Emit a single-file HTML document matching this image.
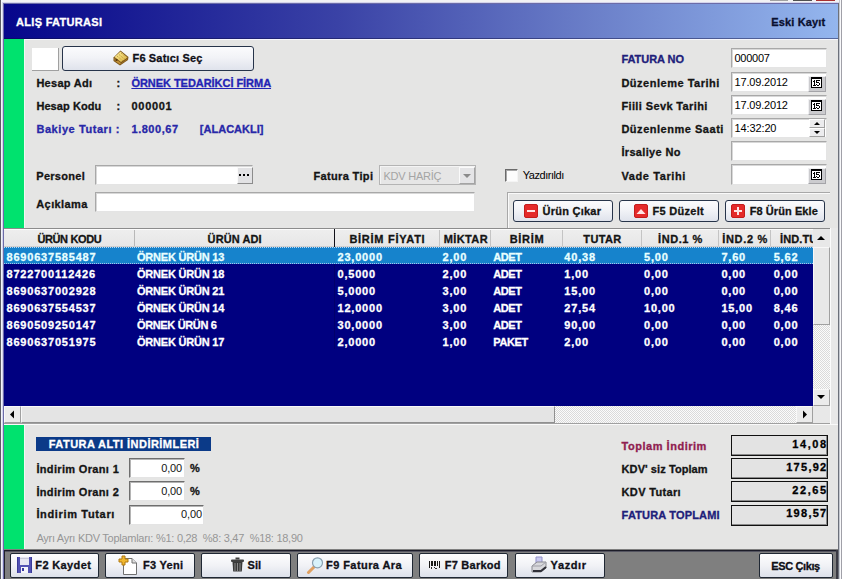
<!DOCTYPE html>
<html><head><meta charset="utf-8">
<style>
*{margin:0;padding:0;box-sizing:border-box}
html,body{width:842px;height:579px;overflow:hidden;background:#e5e5e4;position:relative}
body{font-family:"Liberation Sans",sans-serif;font-size:11px}
.a{position:absolute}
.t{position:absolute;white-space:pre;font-size:11px;line-height:14px;font-family:"Liberation Sans",sans-serif}
.t.b{-webkit-text-stroke:0.3px currentColor}
.inp{position:absolute;background:#fff;border-top:1px solid #a8a8a8;border-left:1px solid #a8a8a8;border-right:1px solid #e4e4e4;border-bottom:1px solid #e4e4e4;box-shadow:inset 1px 1px 0 #d8d8d8}
.btn{position:absolute;border:1px solid #27344a;border-radius:3px;background:linear-gradient(#fbfbfd 0%,#f2f3f7 45%,#dfe3ec 100%)}
.tb{position:absolute;border:1px solid #1f2733;border-radius:2px;background:linear-gradient(#fdfdfe 0%,#f1f2f6 50%,#dde1ea 100%);top:553px;height:25px}
.cal{position:absolute;width:18px;height:16px;background:#cbcbce;border:1px solid #f0f0f2;border-right-color:#a4a4a8;border-bottom-color:#a4a4a8}
.cal i{position:absolute;left:2px;top:1px;width:12px;height:12px;border:1px solid #000;border-top-width:2px;border-right-width:2px;background:#fff;font:bold 9px/9px "Liberation Sans";font-style:normal;text-align:center;color:#000;letter-spacing:-0.6px;text-indent:-1px}
.inp2{border-top-color:#6e6e6e;border-left-color:#6e6e6e;box-shadow:inset 1px 1px 0 #b4b4b4}
.tot{position:absolute;left:731px;width:97px;height:21px;border:1px solid #101010;box-shadow:inset -1px -1px 0 #8a8a8a;background:#e3e3e3}
.sep{position:absolute;top:230px;width:1px;height:16px;background:#c4c4c4}
</style></head><body>
<!-- window frame -->
<div class="a" style="left:0;top:0;width:842px;height:4px;background:#f2f2f4"></div>
<div class="a" style="left:770px;top:0;width:18px;height:1px;background:#a0a0a0"></div>
<div class="a" style="left:793px;top:0;width:19px;height:1px;background:#505050"></div>
<div class="a" style="left:816px;top:0;width:19px;height:1px;background:#a83030"></div>
<div class="a" style="left:0;top:0;width:1px;height:579px;background:#5c5c64"></div>
<div class="a" style="left:1px;top:0;width:2px;height:579px;background:#f2f6fa"></div>
<div class="a" style="left:2px;top:2px;width:1px;height:577px;background:#d4d4ec"></div>
<div class="a" style="left:2px;top:2px;width:837px;height:1px;background:#d4d4ec"></div>
<div class="a" style="left:3px;top:3px;width:1px;height:576px;background:#6c6ca8"></div>
<div class="a" style="left:3px;top:3px;width:836px;height:1px;background:#6c6ca8"></div>
<div class="a" style="left:838px;top:3px;width:1px;height:576px;background:#6c707a"></div>
<div class="a" style="left:839px;top:0;width:1px;height:579px;background:#c4c8d0"></div>
<div class="a" style="left:840px;top:0;width:1px;height:579px;background:#f8f8fa"></div>
<div class="a" style="left:841px;top:0;width:1px;height:579px;background:#a0a0a8"></div>
<!-- header -->
<div class="a" style="left:4px;top:4px;width:834px;height:35px;background:linear-gradient(90deg,#06068c 0%,#121490 10%,#3a42a6 40%,#6a7ec8 70%,#94b6ee 100%)"></div>
<div class="a" style="left:4px;top:38px;width:834px;height:1px;background:rgba(10,10,60,0.45)"></div>
<div class="a" style="left:24px;top:39px;width:814px;height:1px;background:#f6f6fc"></div>
<!-- green strips -->
<div class="a" style="left:4px;top:39px;width:20px;height:189px;background:#00e26e"></div>
<div class="a" style="left:4px;top:425px;width:20px;height:125px;background:#00e26e"></div>
<div class="a" style="left:24px;top:39px;width:1px;height:189px;background:#f0f8f2"></div>
<div class="a" style="left:24px;top:425px;width:1px;height:125px;background:#f0f8f2"></div>
<!-- white box -->
<div class="a" style="left:32px;top:48px;width:27px;height:23px;background:#fff;border-right:1px solid #a0a0a0;border-bottom:1px solid #a0a0a0"></div>
<!-- F6 button -->
<div class="btn" style="left:62px;top:46px;width:192px;height:25px"></div>
<svg class="a" style="left:112px;top:49px" width="18" height="18"><defs><linearGradient id="gy" x1="0" y1="0" x2="1" y2="1"><stop offset="0" stop-color="#fff2a0"/><stop offset="1" stop-color="#d8b040"/></linearGradient></defs><path d="M8.5 1.5 L16.5 8 L16 11 L8 16.5 L1.5 12 L1.5 8.5 Z" fill="#7a5418"/><path d="M8.5 2.5 L15.5 8.5 L9 13 L2.5 8 Z" fill="url(#gy)"/><path d="M2.5 9 L9 14 L8 15.5 L2.5 11.5 Z" fill="#c09038"/><path d="M9.5 14 L15.5 9.5 L15.5 10.5 L9 15 Z" fill="#a87828"/><path d="M5 7 L11 12 M7 5.5 L13 10.5 M9 4 L14.5 8.5" stroke="#b89030" stroke-width="0.8" stroke-dasharray="1.2 1"/><rect x="3.5" y="10" width="2" height="2" fill="#5a3a10"/></svg>
<!-- right inputs -->
<div class="inp" style="left:731px;top:48px;width:96px;height:20px"></div>
<div class="inp" style="left:731px;top:72px;width:96px;height:20px"></div>
<div class="inp" style="left:731px;top:95px;width:96px;height:20px"></div>
<div class="inp" style="left:731px;top:118px;width:96px;height:20px"></div>
<div class="inp" style="left:731px;top:141px;width:96px;height:20px"></div>
<div class="inp" style="left:731px;top:164px;width:96px;height:21px"></div>
<div class="cal" style="left:808px;top:76px"><svg width="18" height="16" style="position:absolute;left:-1px;top:-1px" shape-rendering="crispEdges"><rect x="3" y="1" width="11" height="11" fill="#000"/><rect x="4" y="3" width="9" height="8" fill="#fff"/><path d="M6 4h1v1h-1zM5 5h1v1h-1zM6 5h1v1h-1zM6 6h1v1h-1zM6 7h1v1h-1zM6 8h1v1h-1zM5 9h1v1h-1zM6 9h1v1h-1zM7 9h1v1h-1zM8 4h1v1h-1zM9 4h1v1h-1zM10 4h1v1h-1zM11 4h1v1h-1zM8 5h1v1h-1zM8 6h1v1h-1zM9 6h1v1h-1zM10 6h1v1h-1zM11 7h1v1h-1zM8 8h1v1h-1zM11 8h1v1h-1zM9 9h1v1h-1zM10 9h1v1h-1z" fill="#000"/></svg></div>
<div class="cal" style="left:808px;top:99px"><svg width="18" height="16" style="position:absolute;left:-1px;top:-1px" shape-rendering="crispEdges"><rect x="3" y="1" width="11" height="11" fill="#000"/><rect x="4" y="3" width="9" height="8" fill="#fff"/><path d="M6 4h1v1h-1zM5 5h1v1h-1zM6 5h1v1h-1zM6 6h1v1h-1zM6 7h1v1h-1zM6 8h1v1h-1zM5 9h1v1h-1zM6 9h1v1h-1zM7 9h1v1h-1zM8 4h1v1h-1zM9 4h1v1h-1zM10 4h1v1h-1zM11 4h1v1h-1zM8 5h1v1h-1zM8 6h1v1h-1zM9 6h1v1h-1zM10 6h1v1h-1zM11 7h1v1h-1zM8 8h1v1h-1zM11 8h1v1h-1zM9 9h1v1h-1zM10 9h1v1h-1z" fill="#000"/></svg></div>
<div class="cal" style="left:808px;top:168px"><svg width="18" height="16" style="position:absolute;left:-1px;top:-1px" shape-rendering="crispEdges"><rect x="3" y="1" width="11" height="11" fill="#000"/><rect x="4" y="3" width="9" height="8" fill="#fff"/><path d="M6 4h1v1h-1zM5 5h1v1h-1zM6 5h1v1h-1zM6 6h1v1h-1zM6 7h1v1h-1zM6 8h1v1h-1zM5 9h1v1h-1zM6 9h1v1h-1zM7 9h1v1h-1zM8 4h1v1h-1zM9 4h1v1h-1zM10 4h1v1h-1zM11 4h1v1h-1zM8 5h1v1h-1zM8 6h1v1h-1zM9 6h1v1h-1zM10 6h1v1h-1zM11 7h1v1h-1zM8 8h1v1h-1zM11 8h1v1h-1zM9 9h1v1h-1zM10 9h1v1h-1z" fill="#000"/></svg></div>
<!-- spinner -->
<div class="a" style="left:809px;top:119px;width:16px;height:9px;background:#ececee;border:1px solid #fff;border-right-color:#a0a0a0;border-bottom-color:#a0a0a0"></div>
<div class="a" style="left:809px;top:128px;width:16px;height:9px;background:#ececee;border:1px solid #fff;border-right-color:#a0a0a0;border-bottom-color:#a0a0a0"></div>
<svg class="a" style="left:809px;top:119px" width="16" height="18"><path d="M5 6 L11 6 L8 3 Z" fill="#000"/><path d="M5 12 L11 12 L8 15 Z" fill="#000"/></svg>
<!-- personel -->
<div class="inp" style="left:95px;top:165px;width:158px;height:20px"></div>
<div class="a" style="left:237px;top:167px;width:16px;height:17px;background:#e2e2e4;border:1px solid #fafafa;border-right-color:#8c8c8c;border-bottom-color:#8c8c8c"></div>
<svg class="a" style="left:237px;top:167px" width="16" height="17" shape-rendering="crispEdges"><rect x="2" y="7" width="2" height="2" fill="#000"/><rect x="6" y="7" width="2" height="2" fill="#000"/><rect x="10" y="7" width="2" height="2" fill="#000"/></svg>
<div class="inp" style="left:95px;top:192px;width:380px;height:20px"></div>
<!-- fatura tipi combo -->
<div class="a" style="left:379px;top:165px;width:97px;height:20px;background:#e6e6e6;border:1px solid #b4b4b4;box-shadow:inset 1px 1px 0 #f4f4f4"></div>
<div class="a" style="left:459px;top:167px;width:16px;height:17px;background:#e4e4e6;border:1px solid #fafafa;border-right-color:#a4a4a4;border-bottom-color:#a4a4a4"></div>
<svg class="a" style="left:459px;top:167px" width="16" height="17"><path d="M4 7 L12 7 L8 11 Z" fill="#8a8a8a"/></svg>
<!-- checkbox -->
<div class="a" style="left:505px;top:169px;width:13px;height:13px;background:#fcfcfc;border-top:1px solid #6a6a6a;border-left:1px solid #6a6a6a;border-right:1px solid #f4f4f4;border-bottom:1px solid #f4f4f4;box-shadow:inset 1px 1px 0 #a8a8a8"></div>
<!-- button panel -->
<div class="a" style="left:507px;top:192px;width:323px;height:37px;border-top:1px solid #a8a8a8;border-left:1px solid #a8a8a8;box-shadow:inset 1px 1px 0 #fafafa"></div>
<div class="btn" style="left:513px;top:200px;width:100px;height:22px"></div>
<div class="btn" style="left:619px;top:200px;width:100px;height:22px"></div>
<div class="btn" style="left:725px;top:200px;width:100px;height:22px"></div>
<svg class="a" style="left:524px;top:204px" width="14" height="14"><rect x="0.5" y="0.5" width="13" height="13" rx="1.5" fill="#e42a2a" stroke="#c41c1c"/><rect x="3" y="6" width="8" height="2" fill="#ffe4e4"/></svg>
<svg class="a" style="left:634px;top:204px" width="14" height="14"><rect x="0.5" y="0.5" width="13" height="13" rx="1.5" fill="#e42a2a" stroke="#c41c1c"/><path d="M2.5 10 L7 5 L11.5 10 Z" fill="#ffe4e4"/></svg>
<svg class="a" style="left:731px;top:204px" width="14" height="14"><rect x="0.5" y="0.5" width="13" height="13" rx="1.5" fill="#e42a2a" stroke="#c41c1c"/><rect x="3" y="6" width="8" height="2" fill="#ffe4e4"/><rect x="6" y="3" width="2" height="8" fill="#ffe4e4"/></svg>
<!-- grid -->
<div class="a" style="left:4px;top:228px;width:826px;height:1px;background:#8c8c8c"></div>
<div class="a" style="left:4px;top:229px;width:809px;height:18px;background:linear-gradient(#eeeeee,#e6e6e6);border-top:1px solid #fcfcfc"></div>
<div class="a" style="left:4px;top:246px;width:809px;height:1px;background:#cfcfcf"></div>
<div class="sep" style="left:134px;background:#b8b8b8"></div>
<div class="a" style="left:334px;top:229px;width:1px;height:177px;background:#101018"></div>
<div class="sep" style="left:439px"></div>
<div class="sep" style="left:490px"></div>
<div class="sep" style="left:562px"></div>
<div class="sep" style="left:641px"></div>
<div class="sep" style="left:718px"></div>
<div class="sep" style="left:770px"></div>
<div class="a" style="left:4px;top:247px;width:809px;height:159px;background:#000080"></div>
<div class="a" style="left:334px;top:247px;width:1px;height:102px;background:#00006a"></div>
<div class="a" style="left:4px;top:247px;width:809px;height:17px;background:#1683cc;border-top:1px dotted #c0d8f0;border-bottom:1px dotted #a8c0f0"></div>
<!-- vscroll -->
<div class="a" style="left:813px;top:229px;width:17px;height:177px;background:repeating-conic-gradient(#fbfbfb 0 25%,#dadada 0 50%) 0 0/2px 2px"></div>
<div class="a" style="left:813px;top:229px;width:17px;height:18px;background:#e8e8e8"></div>
<svg class="a" style="left:813px;top:229px" width="16" height="18"><path d="M4 11 L12 11 L8 7 Z" fill="#000"/></svg>
<div class="a" style="left:813px;top:247px;width:17px;height:78px;background:#e8e8e8;border:1px solid #f8f8f8;border-right-color:#a0a0a0;border-bottom-color:#a0a0a0"></div>
<div class="a" style="left:813px;top:389px;width:17px;height:17px;background:#ebebeb;border:1px solid #f8f8f8;border-right-color:#a0a0a0;border-bottom-color:#a0a0a0"></div>
<svg class="a" style="left:813px;top:389px" width="16" height="17"><path d="M4 6 L12 6 L8 10 Z" fill="#000"/></svg>
<!-- hscroll -->
<div class="a" style="left:4px;top:406px;width:826px;height:17px;background:repeating-conic-gradient(#fbfbfb 0 25%,#dadada 0 50%) 0 0/2px 2px"></div>
<div class="a" style="left:4px;top:406px;width:17px;height:17px;background:#ebebeb;border:1px solid #f8f8f8;border-right-color:#a0a0a0;border-bottom-color:#a0a0a0"></div>
<svg class="a" style="left:4px;top:406px" width="17" height="17"><path d="M6 8.5 L10 4.5 L10 12.5 Z" fill="#000"/></svg>
<div class="a" style="left:21px;top:406px;width:534px;height:17px;background:#e4e4e4;border:1px solid #f8f8f8;border-right-color:#909090;border-bottom-color:#909090"></div>
<div class="a" style="left:796px;top:406px;width:17px;height:17px;background:#ebebeb;border:1px solid #f8f8f8;border-right-color:#a0a0a0;border-bottom-color:#a0a0a0"></div>
<svg class="a" style="left:796px;top:406px" width="17" height="17"><path d="M7 4.5 L11 8.5 L7 12.5 Z" fill="#000"/></svg>
<div class="a" style="left:813px;top:406px;width:17px;height:17px;background:#e8e8e8"></div>
<div class="a" style="left:4px;top:423px;width:834px;height:1px;background:#a0a0a0"></div>
<div class="a" style="left:4px;top:424px;width:834px;height:1px;background:#fafafa"></div>
<div class="a" style="left:830px;top:228px;width:8px;height:196px;background:#e8e8e8"></div>
<div class="a" style="left:830px;top:228px;width:1px;height:196px;background:#fcfcfc"></div>
<!-- bottom section -->
<div class="a" style="left:36px;top:437px;width:175px;height:14px;background:#0b3a88"></div>
<div class="inp inp2" style="left:129px;top:458px;width:56px;height:20px"></div>
<div class="inp inp2" style="left:129px;top:481px;width:56px;height:20px"></div>
<div class="inp inp2" style="left:129px;top:505px;width:75px;height:20px"></div>
<div class="tot" style="top:435px"></div>
<div class="tot" style="top:458px"></div>
<div class="tot" style="top:481px"></div>
<div class="tot" style="top:505px"></div>
<!-- toolbar -->
<div class="a" style="left:4px;top:549px;width:834px;height:30px;background:#7f7f7f"></div>
<div class="a" style="left:4px;top:550px;width:834px;height:1px;background:#1c1c28"></div>
<div class="a" style="left:4px;top:551px;width:834px;height:1px;background:#545460"></div>
<div class="a" style="left:4px;top:550px;width:1px;height:29px;background:#20202c"></div>
<div class="a" style="left:836px;top:550px;width:2px;height:29px;background:#3a3a44"></div>
<div class="tb" style="left:10px;width:89px"></div>
<div class="tb" style="left:105px;width:90px"></div>
<div class="tb" style="left:201px;width:90px"></div>
<div class="tb" style="left:297px;width:116px"></div>
<div class="tb" style="left:419px;width:89px"></div>
<div class="tb" style="left:515px;width:90px"></div>
<div class="tb" style="left:759px;width:74px"></div>
<!-- toolbar icons -->
<svg class="a" style="left:17px;top:557px" width="15" height="16" shape-rendering="crispEdges"><path d="M0 1 L1 0 L14 0 L15 1 L15 16 L0 16 Z" fill="#5050c0"/><rect x="1" y="0" width="13" height="16" fill="#5252b4"/><rect x="3" y="0" width="9" height="8" fill="#e6e6f2"/><rect x="3" y="1" width="9" height="1" fill="#c8c8d8"/><rect x="4" y="10" width="7" height="6" fill="#f4f4fa"/><rect x="5" y="11" width="2" height="3" fill="#3a3aa0"/><rect x="0" y="0" width="1" height="16" fill="#3a3a98"/><rect x="14" y="0" width="1" height="16" fill="#3a3a98"/></svg>
<svg class="a" style="left:118px;top:555px" width="20" height="20"><path d="M5.5 3.5 L14 3.5 L18.5 8 L18.5 19.5 L5.5 19.5 Z" fill="#fff" stroke="#707070"/><path d="M14 3.5 L14 8 L18.5 8" fill="#e0e0e0" stroke="#707070"/><path d="M4 1 L7 1 L7 4 L10 4 L10 7 L7 7 L7 10 L4 10 L4 7 L1 7 L1 4 L4 4 Z" fill="#f0b830" stroke="#b07810"/></svg>
<svg class="a" style="left:231px;top:557px" width="13" height="15"><path d="M4.5 1.5 L8.5 1.5" stroke="#404040" stroke-width="2"/><rect x="0" y="2.5" width="13" height="2.5" rx="1" fill="#404040"/><path d="M1.5 5 L11.5 5 L10.8 14.5 L2.2 14.5 Z" fill="#3a3a3a"/><path d="M4 6 L4 14 M6.5 6 L6.5 14 M9 6 L9 14" stroke="#8a8a8a" stroke-width="1"/></svg>
<svg class="a" style="left:306px;top:556px" width="18" height="18"><path d="M8 11 L2.5 16.5" stroke="#e0a060" stroke-width="3" stroke-linecap="round"/><circle cx="11.5" cy="6.8" r="5" fill="#d8f2fa" stroke="#8aa0b0" stroke-width="1.2"/></svg>
<svg class="a" style="left:429px;top:561px" width="12" height="8" shape-rendering="crispEdges"><rect x="0" y="0" width="1" height="7" fill="#181818"/><rect x="2" y="0" width="2" height="5" fill="#181818"/><rect x="5" y="0" width="2" height="5" fill="#181818"/><rect x="8" y="0" width="1" height="5" fill="#181818"/><rect x="10" y="0" width="1" height="7" fill="#181818"/><rect x="2" y="6" width="1" height="2" fill="#303030"/><rect x="5" y="6" width="1" height="1" fill="#303030"/><rect x="6" y="7" width="2" height="1" fill="#303030"/></svg>
<svg class="a" style="left:531px;top:556px" width="17" height="17"><path d="M5 1 L11 1 L11 8 L5 8 Z" fill="#c8c8f0" stroke="#9090c8" stroke-width="1"/><path d="M1 10 L6 6 L15 6 L15 12 L10 16 L1 16 Z" fill="#d8d8dc" stroke="#8a8a90" stroke-width="1"/><path d="M1 10 L10 10 L15 6" fill="none" stroke="#a0a0a8"/><path d="M2 15 L10 15 L15 11" fill="none" stroke="#303038" stroke-width="2"/></svg>
<div class="a" style="left:771px;top:229px;width:42px;height:17px;overflow:hidden"><div class="t b" style="left:9px;top:3px;color:#141414;font-weight:700;letter-spacing:0.1px">İND.TUTAR</div></div>
<div class='t b' style="left:16px;top:15px;font-weight:700;color:#ffffff;letter-spacing:0.309px;">ALIŞ FATURASI</div>
<div class='t b' style="left:771.3px;top:15px;font-weight:700;color:#0a1030;letter-spacing:0.145px;">Eski Kayıt</div>
<div class='t b' style="left:132.5px;top:51px;font-weight:700;color:#101018;letter-spacing:0.160px;">F6 Satıcı Seç</div>
<div class='t b' style="left:36.4px;top:76px;font-weight:700;color:#141414;letter-spacing:0.276px;">Hesap Adı</div>
<div class='t b' style="left:116.5px;top:76px;font-weight:700;color:#141414;">:</div>
<div class='t b' style="left:131.4px;top:76px;font-weight:700;color:#2323b4;letter-spacing:-0.043px;text-decoration:underline;text-underline-offset:1px;">ÖRNEK TEDARİKCİ FİRMA</div>
<div class='t b' style="left:36.4px;top:99px;font-weight:700;color:#141414;letter-spacing:0.079px;">Hesap Kodu</div>
<div class='t b' style="left:116.5px;top:99px;font-weight:700;color:#141414;">:</div>
<div class='t b' style="left:131.5px;top:99px;font-weight:700;color:#141414;letter-spacing:0.696px;">000001</div>
<div class='t b' style="left:36.4px;top:122px;font-weight:700;color:#2828a8;letter-spacing:0.571px;">Bakiye Tutarı :</div>
<div class='t b' style="left:131.5px;top:122px;font-weight:700;color:#2828a8;letter-spacing:0.525px;">1.800,67</div>
<div class='t b' style="left:199.8px;top:122px;font-weight:700;color:#2828a8;letter-spacing:0.017px;">[ALACAKLI]</div>
<div class='t b' style="left:36.3px;top:169px;font-weight:700;color:#141414;letter-spacing:0.276px;">Personel</div>
<div class='t b' style="left:36.3px;top:197px;font-weight:700;color:#141414;letter-spacing:0.384px;">Açıklama</div>
<div class='t b' style="left:313.5px;top:169px;font-weight:700;color:#141414;letter-spacing:0.347px;">Fatura Tipi</div>
<div class='t' style="left:383.5px;top:169px;font-weight:400;color:#a4a4a4;letter-spacing:-0.238px;">KDV HARİÇ</div>
<div class='t' style="left:522.7px;top:168px;font-weight:400;color:#000000;letter-spacing:-0.451px;">Yazdırıldı</div>
<div class='t b' style="left:621.4px;top:52px;font-weight:700;color:#20207a;letter-spacing:-0.032px;">FATURA NO</div>
<div class='t b' style="left:621.4px;top:76px;font-weight:700;color:#141414;letter-spacing:0.516px;">Düzenleme Tarihi</div>
<div class='t b' style="left:621.4px;top:99px;font-weight:700;color:#141414;letter-spacing:0.382px;">Fiili Sevk Tarihi</div>
<div class='t b' style="left:621.4px;top:122px;font-weight:700;color:#141414;letter-spacing:0.524px;">Düzenlenme Saati</div>
<div class='t b' style="left:621.4px;top:145px;font-weight:700;color:#141414;letter-spacing:0.336px;">İrsaliye No</div>
<div class='t b' style="left:621.4px;top:168.6px;font-weight:700;color:#141414;letter-spacing:0.613px;">Vade Tarihi</div>
<div class='t' style="left:734.5px;top:51px;font-weight:400;color:#000;letter-spacing:-0.244px;">000007</div>
<div class='t' style="left:734.5px;top:75px;font-weight:400;color:#000;letter-spacing:-0.174px;">17.09.2012</div>
<div class='t' style="left:734.5px;top:98px;font-weight:400;color:#000;letter-spacing:-0.174px;">17.09.2012</div>
<div class='t' style="left:734.5px;top:121px;font-weight:400;color:#000;letter-spacing:-0.118px;">14:32:20</div>
<div class='t b' style="left:542.6px;top:204px;font-weight:700;color:#141414;letter-spacing:0.239px;">Ürün Çıkar</div>
<div class='t b' style="left:652.5px;top:204px;font-weight:700;color:#141414;letter-spacing:0.299px;">F5 Düzelt</div>
<div class='t b' style="left:749.7px;top:204px;font-weight:700;color:#141414;letter-spacing:0.077px;">F8 Ürün Ekle</div>
<div class='t b' style="left:37.4px;top:232px;font-weight:700;color:#141414;letter-spacing:-0.367px;">ÜRÜN KODU</div>
<div class='t b' style="left:207.6px;top:232px;font-weight:700;color:#141414;letter-spacing:0.089px;">ÜRÜN ADI</div>
<div class='t b' style="left:349.4px;top:232px;font-weight:700;color:#141414;letter-spacing:0.733px;">BİRİM FİYATI</div>
<div class='t b' style="left:443.7px;top:232px;font-weight:700;color:#141414;letter-spacing:0.386px;">MİKTAR</div>
<div class='t b' style="left:509.7px;top:232px;font-weight:700;color:#141414;letter-spacing:0.707px;">BİRİM</div>
<div class='t b' style="left:583.3px;top:232px;font-weight:700;color:#141414;letter-spacing:0.383px;">TUTAR</div>
<div class='t b' style="left:658px;top:232px;font-weight:700;color:#141414;letter-spacing:0.572px;">İND.1 %</div>
<div class='t b' style="left:722.2px;top:232px;font-weight:700;color:#141414;letter-spacing:0.689px;">İND.2 %</div>
<div class='t b' style="left:6.5px;top:250px;font-weight:700;color:#e8ffff;letter-spacing:0.8px;">8690637585487</div>
<div class='t b' style="left:137px;top:250px;font-weight:700;color:#e8ffff;letter-spacing:-0.213px;">ÖRNEK ÜRÜN 13</div>
<div class='t b' style="left:337.5px;top:250px;font-weight:700;color:#e8ffff;letter-spacing:0.8px;">23,0000</div>
<div class='t b' style="left:442.5px;top:250px;font-weight:700;color:#e8ffff;letter-spacing:0.8px;">2,00</div>
<div class='t b' style="left:493.3px;top:250px;font-weight:700;color:#e8ffff;letter-spacing:-0.451px;">ADET</div>
<div class='t b' style="left:564.3px;top:250px;font-weight:700;color:#e8ffff;letter-spacing:0.8px;">40,38</div>
<div class='t b' style="left:644px;top:250px;font-weight:700;color:#e8ffff;letter-spacing:0.8px;">5,00</div>
<div class='t b' style="left:721.4px;top:250px;font-weight:700;color:#e8ffff;letter-spacing:0.8px;">7,60</div>
<div class='t b' style="left:773.7px;top:250px;font-weight:700;color:#e8ffff;letter-spacing:0.8px;">5,62</div>
<div class='t b' style="left:6.5px;top:267px;font-weight:700;color:#ffffff;letter-spacing:0.8px;">8722700112426</div>
<div class='t b' style="left:137px;top:267px;font-weight:700;color:#ffffff;letter-spacing:-0.213px;">ÖRNEK ÜRÜN 18</div>
<div class='t b' style="left:337.5px;top:267px;font-weight:700;color:#ffffff;letter-spacing:0.8px;">0,5000</div>
<div class='t b' style="left:442.5px;top:267px;font-weight:700;color:#ffffff;letter-spacing:0.8px;">2,00</div>
<div class='t b' style="left:493.3px;top:267px;font-weight:700;color:#ffffff;letter-spacing:-0.451px;">ADET</div>
<div class='t b' style="left:564.3px;top:267px;font-weight:700;color:#ffffff;letter-spacing:0.8px;">1,00</div>
<div class='t b' style="left:644px;top:267px;font-weight:700;color:#ffffff;letter-spacing:0.8px;">0,00</div>
<div class='t b' style="left:721.4px;top:267px;font-weight:700;color:#ffffff;letter-spacing:0.8px;">0,00</div>
<div class='t b' style="left:773.7px;top:267px;font-weight:700;color:#ffffff;letter-spacing:0.8px;">0,00</div>
<div class='t b' style="left:6.5px;top:284px;font-weight:700;color:#ffffff;letter-spacing:0.8px;">8690637002928</div>
<div class='t b' style="left:137px;top:284px;font-weight:700;color:#ffffff;letter-spacing:-0.213px;">ÖRNEK ÜRÜN 21</div>
<div class='t b' style="left:337.5px;top:284px;font-weight:700;color:#ffffff;letter-spacing:0.8px;">5,0000</div>
<div class='t b' style="left:442.5px;top:284px;font-weight:700;color:#ffffff;letter-spacing:0.8px;">3,00</div>
<div class='t b' style="left:493.3px;top:284px;font-weight:700;color:#ffffff;letter-spacing:-0.451px;">ADET</div>
<div class='t b' style="left:564.3px;top:284px;font-weight:700;color:#ffffff;letter-spacing:0.8px;">15,00</div>
<div class='t b' style="left:644px;top:284px;font-weight:700;color:#ffffff;letter-spacing:0.8px;">0,00</div>
<div class='t b' style="left:721.4px;top:284px;font-weight:700;color:#ffffff;letter-spacing:0.8px;">0,00</div>
<div class='t b' style="left:773.7px;top:284px;font-weight:700;color:#ffffff;letter-spacing:0.8px;">0,00</div>
<div class='t b' style="left:6.5px;top:301px;font-weight:700;color:#ffffff;letter-spacing:0.8px;">8690637554537</div>
<div class='t b' style="left:137px;top:301px;font-weight:700;color:#ffffff;letter-spacing:-0.213px;">ÖRNEK ÜRÜN 14</div>
<div class='t b' style="left:337.5px;top:301px;font-weight:700;color:#ffffff;letter-spacing:0.8px;">12,0000</div>
<div class='t b' style="left:442.5px;top:301px;font-weight:700;color:#ffffff;letter-spacing:0.8px;">3,00</div>
<div class='t b' style="left:493.3px;top:301px;font-weight:700;color:#ffffff;letter-spacing:-0.451px;">ADET</div>
<div class='t b' style="left:564.3px;top:301px;font-weight:700;color:#ffffff;letter-spacing:0.8px;">27,54</div>
<div class='t b' style="left:644px;top:301px;font-weight:700;color:#ffffff;letter-spacing:0.8px;">10,00</div>
<div class='t b' style="left:721.4px;top:301px;font-weight:700;color:#ffffff;letter-spacing:0.8px;">15,00</div>
<div class='t b' style="left:773.7px;top:301px;font-weight:700;color:#ffffff;letter-spacing:0.8px;">8,46</div>
<div class='t b' style="left:6.5px;top:318px;font-weight:700;color:#ffffff;letter-spacing:0.8px;">8690509250147</div>
<div class='t b' style="left:137px;top:318px;font-weight:700;color:#ffffff;letter-spacing:-0.358px;">ÖRNEK ÜRÜN 6</div>
<div class='t b' style="left:337.5px;top:318px;font-weight:700;color:#ffffff;letter-spacing:0.8px;">30,0000</div>
<div class='t b' style="left:442.5px;top:318px;font-weight:700;color:#ffffff;letter-spacing:0.8px;">3,00</div>
<div class='t b' style="left:493.3px;top:318px;font-weight:700;color:#ffffff;letter-spacing:-0.451px;">ADET</div>
<div class='t b' style="left:564.3px;top:318px;font-weight:700;color:#ffffff;letter-spacing:0.8px;">90,00</div>
<div class='t b' style="left:644px;top:318px;font-weight:700;color:#ffffff;letter-spacing:0.8px;">0,00</div>
<div class='t b' style="left:721.4px;top:318px;font-weight:700;color:#ffffff;letter-spacing:0.8px;">0,00</div>
<div class='t b' style="left:773.7px;top:318px;font-weight:700;color:#ffffff;letter-spacing:0.8px;">0,00</div>
<div class='t b' style="left:6.5px;top:335px;font-weight:700;color:#ffffff;letter-spacing:0.8px;">8690637051975</div>
<div class='t b' style="left:137px;top:335px;font-weight:700;color:#ffffff;letter-spacing:-0.213px;">ÖRNEK ÜRÜN 17</div>
<div class='t b' style="left:337.5px;top:335px;font-weight:700;color:#ffffff;letter-spacing:0.8px;">2,0000</div>
<div class='t b' style="left:442.5px;top:335px;font-weight:700;color:#ffffff;letter-spacing:0.8px;">1,00</div>
<div class='t b' style="left:493.3px;top:335px;font-weight:700;color:#ffffff;letter-spacing:-0.367px;">PAKET</div>
<div class='t b' style="left:564.3px;top:335px;font-weight:700;color:#ffffff;letter-spacing:0.8px;">2,00</div>
<div class='t b' style="left:644px;top:335px;font-weight:700;color:#ffffff;letter-spacing:0.8px;">0,00</div>
<div class='t b' style="left:721.4px;top:335px;font-weight:700;color:#ffffff;letter-spacing:0.8px;">0,00</div>
<div class='t b' style="left:773.7px;top:335px;font-weight:700;color:#ffffff;letter-spacing:0.8px;">0,00</div>
<div class='t b' style="left:48.8px;top:436.6px;font-weight:700;color:#ffffff;letter-spacing:0.462px;">FATURA ALTI İNDİRİMLERİ</div>
<div class='t b' style="left:36.4px;top:461.5px;font-weight:700;color:#141414;letter-spacing:0.340px;">İndirim Oranı 1</div>
<div class='t b' style="left:36.4px;top:485px;font-weight:700;color:#141414;letter-spacing:0.340px;">İndirim Oranı 2</div>
<div class='t b' style="left:36.4px;top:507px;font-weight:700;color:#141414;letter-spacing:0.656px;">İndirim Tutarı</div>
<div class='t' style="right:659.94px;top:460.5px;font-weight:400;color:#141414;letter-spacing:-0.141px;">0,00</div>
<div class='t' style="right:659.94px;top:483.5px;font-weight:400;color:#141414;letter-spacing:-0.141px;">0,00</div>
<div class='t' style="right:640.14px;top:506.5px;font-weight:400;color:#141414;letter-spacing:-0.141px;">0,00</div>
<div class='t b' style="left:190px;top:461px;font-weight:700;color:#141414;">%</div>
<div class='t b' style="left:190px;top:484px;font-weight:700;color:#141414;">%</div>
<div class='t' style="left:36.4px;top:530.5px;font-weight:400;color:#969696;letter-spacing:-0.269px;">Ayrı Ayrı KDV Toplamları: %1: 0,28  %8: 3,47  %18: 18,90</div>
<div class='t b' style="left:621.6px;top:439px;font-weight:700;color:#902050;letter-spacing:0.521px;">Toplam İndirim</div>
<div class='t b' style="left:621.6px;top:461.5px;font-weight:700;color:#141414;letter-spacing:0.076px;">KDV' siz Toplam</div>
<div class='t b' style="left:621.6px;top:484.5px;font-weight:700;color:#141414;letter-spacing:0.330px;">KDV Tutarı</div>
<div class='t b' style="left:621.6px;top:508px;font-weight:700;color:#20207a;letter-spacing:0.174px;">FATURA TOPLAMI</div>
<div class='t b' style="right:14.18px;top:437px;font-weight:700;color:#000;letter-spacing:1.617px;">14,08</div>
<div class='t b' style="right:14.53px;top:460px;font-weight:700;color:#000;letter-spacing:1.269px;">175,92</div>
<div class='t b' style="right:14.18px;top:483px;font-weight:700;color:#000;letter-spacing:1.617px;">22,65</div>
<div class='t b' style="right:14.53px;top:506px;font-weight:700;color:#000;letter-spacing:1.269px;">198,57</div>
<div class='t b' style="left:35.3px;top:558px;font-weight:700;color:#101018;letter-spacing:0.365px;">F2 Kaydet</div>
<div class='t b' style="left:143px;top:558px;font-weight:700;color:#101018;letter-spacing:0.279px;">F3 Yeni</div>
<div class='t b' style="left:247.6px;top:558px;font-weight:700;color:#101018;letter-spacing:-0.027px;">Sil</div>
<div class='t b' style="left:326px;top:558px;font-weight:700;color:#101018;letter-spacing:0.432px;">F9 Fatura Ara</div>
<div class='t b' style="left:444.8px;top:558px;font-weight:700;color:#101018;letter-spacing:0.225px;">F7 Barkod</div>
<div class='t b' style="left:550.6px;top:558px;font-weight:700;color:#101018;letter-spacing:0.599px;">Yazdır</div>
<div class='t b' style="left:771.3px;top:559px;font-weight:700;color:#101018;letter-spacing:-0.384px;">ESC Çıkış</div>
</body></html>
